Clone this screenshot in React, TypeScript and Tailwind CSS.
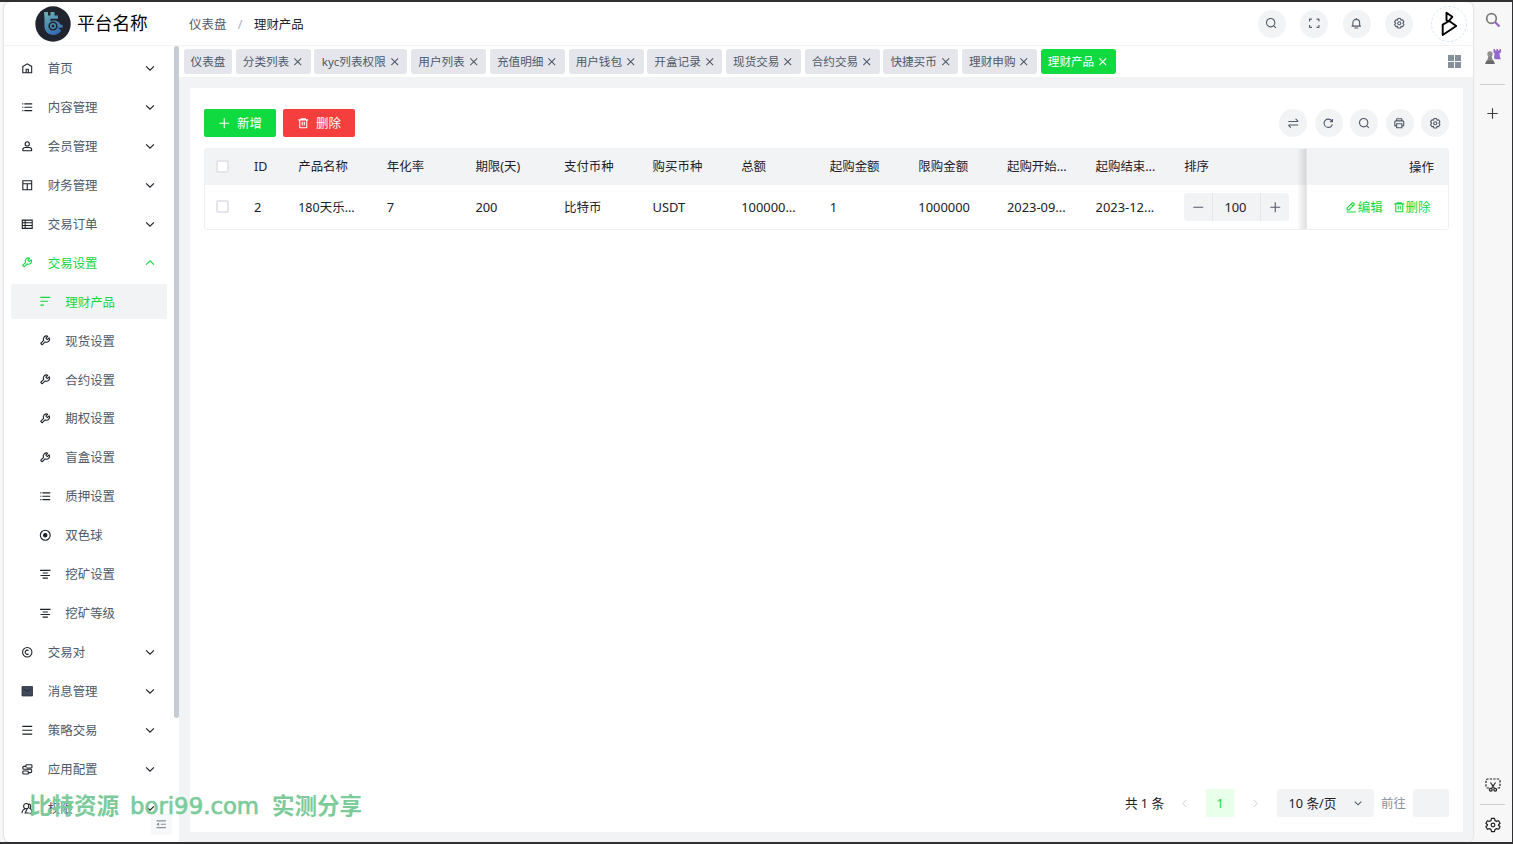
import React from "react";

const PATHS: Record<string, string> = {
  home: "M7 17 24 7l17 10v24H7V17ZM20 28h8v13h-8V28Z",
  list: "M13 24h30M5 11h4M13 37h30M13 11h30M5 24h4M5 37h4",
  user: "M7 37c0-4.97 4.03-8 9-8h16c4.97 0 9 3.03 9 8v3a1 1 0 0 1-1 1H8a1 1 0 0 1-1-1v-3ZM32 15a8 8 0 1 1-16 0 8 8 0 0 1 16 0Z",
  layout: "M7 7h34v34H7V7ZM7 18h34M24 18v23",
  table: "M5 8h38v32H5V8ZM5 18h38M5 29h38M16 8v32",
  tool: "M19.994 11.035c3.66-3.659 9.094-4.46 13.531-2.405a.1.1 0 0 1 .028.16l-6.488 6.488a1 1 0 0 0 0 1.414l4.243 4.243a1 1 0 0 0 1.414 0l6.488-6.488a.1.1 0 0 1 .16.028c2.056 4.437 1.254 9.872-2.405 13.53-3.695 3.696-9.2 4.477-13.66 2.347L12.923 40.733a1 1 0 0 1-1.414 0L7.266 36.49a1 1 0 0 1 0-1.414l10.382-10.381c-2.13-4.46-1.349-9.965 2.346-13.66Z",
  sort: "M43 9H5m0 30h14m15.5-15H5",
  center: "M44 9H4m38 20H6m28-10H14m20 20H14",
  copyright: "M29.292 18a8 8 0 1 0 0 12M42 24c0 9.941-8.059 18-18 18S6 33.941 6 24 14.059 6 24 6s18 8.059 18 18Z",
  menu: "M5 9h38M5 24h38M5 39h38",
  relation: "M19 17V10a3 3 0 0 1 3-3h17a3 3 0 0 1 3 3v6a3 3 0 0 1-3 3H22M17 13h-6a4 4 0 0 0-4 4v3a4 4 0 0 0 4 4h26a4 4 0 0 1 4 4v5a4 4 0 0 1-4 4h-7M10 31h15a3 3 0 0 1 3 3v5a3 3 0 0 1-3 3H10a3 3 0 0 1-3-3v-5a3 3 0 0 1 3-3Z",
  usergroup: "M30 16a10 10 0 1 1-20 0 10 10 0 0 1 20 0ZM4 43c0-9 5-15 12-17M24 26l-8 16h14M30 7c8 1 10 11 4 17 6 3 9 9 9 19H32",
  search: "M33.072 33.071c6.248-6.248 6.248-16.379 0-22.627-6.249-6.249-16.38-6.249-22.628 0-6.248 6.248-6.248 16.379 0 22.627 6.248 6.248 16.38 6.248 22.628 0Zm0 0 8.485 8.485",
  full: "M42 17V9a1 1 0 0 0-1-1h-8M6 17V9a1 1 0 0 1 1-1h8m27 23v8a1 1 0 0 1-1 1h-8M6 31v8a1 1 0 0 0 1 1h8",
  bell: "M24 9c7.18 0 13 5.82 13 13v13H11V22c0-7.18 5.82-13 13-13Zm0 0V4M6 35h36m-25 7h14",
  settings: "M18.797 6.732A1 1 0 0 1 19.76 6h8.48a1 1 0 0 1 .964.732l1.285 4.628a1 1 0 0 0 1.213.7l4.651-1.2a1 1 0 0 1 1.116.468l4.24 7.344a1 1 0 0 1-.153 1.2L38.193 23.3a1 1 0 0 0 0 1.402l3.364 3.427a1 1 0 0 1 .153 1.2l-4.24 7.344a1 1 0 0 1-1.116.468l-4.65-1.2a1 1 0 0 0-1.214.7l-1.285 4.628a1 1 0 0 1-.964.732h-8.48a1 1 0 0 1-.963-.732L17.51 36.64a1 1 0 0 0-1.213-.7l-4.65 1.2a1 1 0 0 1-1.116-.468l-4.24-7.344a1 1 0 0 1 .153-1.2L9.809 24.7a1 1 0 0 0 0-1.402l-3.364-3.427a1 1 0 0 1-.153-1.2l4.24-7.344a1 1 0 0 1 1.116-.468l4.65 1.2a1 1 0 0 0 1.213-.7l1.286-4.628ZM30 24a6 6 0 1 1-12 0 6 6 0 0 1 12 0Z",
  swap: "M5 17h35.586c.89 0 1.337-1.077.707-1.707L33 7M43 31H7.414c-.89 0-1.337 1.077-.707 1.707L15 41",
  refresh: "M38.837 18C36.463 12.136 30.715 8 24 8 15.163 8 8 15.163 8 24s7.163 16 16 16c7.455 0 13.72-5.1 15.496-12M40 8v10H30",
  printer: "M14 15V8a1 1 0 0 1 1-1h18a1 1 0 0 1 1 1v7M14 34H8a1 1 0 0 1-1-1V19a4 4 0 0 1 4-4h26a4 4 0 0 1 4 4v14a1 1 0 0 1-1 1h-6M14 26h20v15H14V26Z",
  edit: "m30.48 19.038 5.733-5.734a1 1 0 0 0 0-1.414l-5.586-5.586a1 1 0 0 0-1.414 0l-5.734 5.734m7 7L15.763 33.754a1 1 0 0 1-.59.286l-6.048.708a1 1 0 0 1-1.113-1.069l.477-6.31a1 1 0 0 1 .29-.631l14.7-14.7m7 7-7-7M6 42h36",
  trash: "M5 11h5.5m0 0v29a1 1 0 0 0 1 1h25a1 1 0 0 0 1-1V11m-27 0H16m21.5 0H43m-5.5 0H32m-16 0V7h16v4m-16 0h16M20 18v15m8-15v15",
  plus: "M5 24h38M24 5v38",
  minus: "M5 24h38",
  down: "M39.6 17.443 24.043 33 8.487 17.443",
  up: "M39.6 30.557 24.043 15 8.487 30.557",
  left: "M32 8.4 16.444 23.956 32 39.513",
  right: "m16 39.513 15.556-15.557L16 8.4",
  close: "M9.857 9.858 38.142 38.142M38.142 9.858 9.857 38.142",
  fold: "M42 11H6M42 24H22M42 37H6M13.66 26.912l-4.82-3.118 4.82-3.118v6.236Z",
};

function Icon({ name, className = "size-[12.5px]", sw = 4.2 }: { name: string; className?: string; sw?: number }) {
  if (name === "record")
    return (
      <svg viewBox="0 0 48 48" className={className} fill="none" stroke="currentColor" strokeWidth={sw}>
        <circle cx="24" cy="24" r="19" />
        <circle cx="24" cy="24" r="6.500" fill="currentColor" />
      </svg>
    );
  if (name === "mail")
    return (
      <svg viewBox="0 0 48 48" className={className}>
        <path d="M4 6h40v36H4z" fill="#3f4a5c" />
        <path d="M4 6h40v36H4zM10 15l14 9 14-9" fill="none" stroke="#1d2129" strokeWidth="3" />
      </svg>
    );
  return (
    <svg viewBox="0 0 48 48" className={className} fill="none" stroke="currentColor" strokeWidth={sw}>
      <path d={PATHS[name]} />
    </svg>
  );
}

const MENU: [string, string, ("sub" | "open" | "active")?][] = [
  ["home", "首页"],
  ["list", "内容管理"],
  ["user", "会员管理"],
  ["layout", "财务管理"],
  ["table", "交易订单"],
  ["tool", "交易设置", "open"],
  ["sort", "理财产品", "active"],
  ["tool", "现货设置", "sub"],
  ["tool", "合约设置", "sub"],
  ["tool", "期权设置", "sub"],
  ["tool", "盲盒设置", "sub"],
  ["list", "质押设置", "sub"],
  ["record", "双色球", "sub"],
  ["center", "挖矿设置", "sub"],
  ["center", "挖矿等级", "sub"],
  ["copyright", "交易对"],
  ["mail", "消息管理"],
  ["menu", "策略交易"],
  ["relation", "应用配置"],
  ["usergroup", "权限"],
];

const TABS = ["仪表盘", "分类列表", "kyc列表权限", "用户列表", "充值明细", "用户钱包", "开盒记录", "现货交易", "合约交易", "快捷买币", "理财申购", "理财产品"];

const COLUMNS: [string, string][] = [
  ["产品名称", "180天乐..."],
  ["年化率", "7"],
  ["期限(天)", "200"],
  ["支付币种", "比特币"],
  ["购买币种", "USDT"],
  ["总额", "100000..."],
  ["起购金额", "1"],
  ["限购金额", "1000000"],
  ["起购开始...", "2023-09..."],
  ["起购结束...", "2023-12..."],
];

const GRID = "grid grid-cols-[35.5px_44px_repeat(10,88.6px)_1fr_142px] items-center";

function MenuRow({ icon, label, kind }: { icon: string; label: string; kind?: string }) {
  const sub = kind === "sub" || kind === "active";
  const green = kind === "open" || kind === "active";
  return (
    <div
      className={`mb-[3.95px] flex h-[35px] shrink-0 items-center rounded-[2px] pr-[11px] ${sub ? "pl-[27.5px]" : "pl-[10px]"} ${
        kind === "active" ? "bg-[#f2f3f5]" : ""
      }`}
    >
      <span className={green ? "text-[#12d83f]" : "text-[#1d2129]"}>
        <Icon name={icon} />
      </span>
      <span className={`ml-[14.300px] flex-1 pt-[2.500px] ${green ? "text-[#12d83f]" : "text-[#4e5969]"}`}>{label}</span>
      {!sub && (
        <span className={green ? "text-[#12d83f]" : "text-[#1d2129]"}>
          <Icon name={green ? "up" : "down"} className="size-3" sw={4.6} />
        </span>
      )}
    </div>
  );
}

function Round({ name }: { name: string }) {
  return (
    <div className="flex size-7 items-center justify-center rounded-full bg-[#f2f3f5] text-[#4e5969]">
      <Icon name={name} />
    </div>
  );
}

function Logo() {
  return (
    <svg viewBox="0 0 36 36" className="size-9">
      <defs>
        <linearGradient id="lg" x1="0.2" y1="0" x2="0.6" y2="1">
          <stop offset="0" stopColor="#68b0b4" />
          <stop offset="1" stopColor="#3569b4" />
        </linearGradient>
      </defs>
      <circle cx="18" cy="18" r="17.7" fill="#20242f" />
      <path
        d="M9 6h4v3.500h2.500V6h4v3.500H23v3.300h-7.500v2.400a7.500 7.500 0 0 1 10 3.300l2.200.7v2.500h-4.700a5 5 0 1 1-.8-4.700 5 5 0 1 0 .8 4.700l3.200 2.800a9 9 0 0 1-7.700 4.500c-5.500 0-9-3.600-9-9V12.800Z"
        fill="url(#lg)"
      />
      <circle cx="18" cy="20" r="4.600" fill="#20242f" />
      <circle cx="18" cy="20" r="3" fill="#4a93b4" />
      <circle cx="18" cy="20" r="1.500" fill="#20242f" />
    </svg>
  );
}

function Sidebar() {
  return (
    <aside className="flex w-[175px] shrink-0">
      <div className="relative flex w-[170px] flex-col overflow-hidden px-[7px] pt-[4.5px]">
        {MENU.map(([icon, label, kind]) => (
          <MenuRow key={label + icon} icon={icon} label={label} kind={kind} />
        ))}
        <div className="absolute bottom-[7px] left-[147px] flex size-[21px] items-center justify-center bg-[#f7f8fa] text-[#86909c]">
          <Icon name="fold" />
        </div>
      </div>
      <div className="h-[672px] w-[5px] rounded-full bg-[#c6ccd4]" />
    </aside>
  );
}

function Header() {
  return (
    <header className="flex h-[44px] shrink-0 items-center border-b border-[#f2f3f5] pr-[6px]">
      <div className="flex w-[185px] items-center gap-[6.500px] pl-[30.500px] text-[17.700px] text-black">
        <Logo />
        <span>平台名称</span>
      </div>
      <div className="flex flex-1 items-center gap-[11.500px] pt-[3.500px] text-[#4e5969]">
        <span>仪表盘</span>
        <span className="text-[#a9b0ba]">/</span>
        <span className="text-[#1d2129]">理财产品</span>
      </div>
      <div className="flex items-center gap-[14.500px]">
        <Round name="search" />
        <Round name="full" />
        <Round name="bell" />
        <Round name="settings" />
      </div>
      <svg viewBox="0 0 36 36" className="ml-[18px] size-9">
        <circle cx="18" cy="18" r="17.500" fill="white" stroke="#cfe0f5" strokeWidth="0.8" strokeDasharray="3 1.500" />
        <path d="M15.500 6.800 21.300 10.800 17.500 15.300 15.500 14.300ZM18.300 15 25.200 20 11.700 29V18.700Z" fill="none" stroke="black" strokeWidth="1.900" strokeLinejoin="round" />
      </svg>
    </header>
  );
}

function Tabs() {
  return (
    <div className="flex h-[30.500px] shrink-0 items-center justify-between bg-white pr-[12.500px] pl-[5px]">
      <div className="flex gap-[3.800px] text-[11.600px]">
        {TABS.map((t, i) => (
          <div
            key={t}
            className={`flex h-[24.500px] items-center justify-center gap-[3px] rounded-[3px] whitespace-nowrap ${
              i === 0 ? "w-[48px]" : i === 2 ? "w-[93px]" : "w-[74.900px]"
            } ${i === 11 ? "bg-[#0fda3f] text-white" : "bg-[#e5e6eb] text-[#4e5969]"}`}
          >
            <span className="pt-[2px]">{t}</span>
            {i > 0 && (
              <span className="pt-px">
                <Icon name="close" className="size-[11.500px]" sw={4.500} />
              </span>
            )}
          </div>
        ))}
      </div>
      <div className="grid grid-cols-2 gap-px">
        <i className="size-[6px] bg-[#86909c]" />
        <i className="size-[6px] bg-[#86909c]" />
        <i className="size-[6px] bg-[#86909c]" />
        <i className="size-[6px] bg-[#86909c]" />
      </div>
    </div>
  );
}

function Check() {
  return <div className="ml-[11px] size-[13px] -translate-y-px rounded-[2px] border-2 border-[#e5e6eb] bg-white" />;
}

function DataTable() {
  return (
    <div className="relative mt-[11px] rounded-[3px] border border-[#eff0f3] text-[#1d2129]">
      <div className={`${GRID} h-[36px] bg-[#f2f3f5]`}>
        <Check />
        <div className="pt-px pl-[13.500px]">ID</div>
        {COLUMNS.map(([h]) => (
          <div key={h} className="pt-px pl-[13.700px] whitespace-nowrap">{h}</div>
        ))}
        <div className="pt-px pl-[13.700px]">排序</div>
        <div className="flex h-full items-center justify-end border-l border-[#e5e6eb] pt-[2px] pr-[14px]">操作</div>
      </div>
      <div className={`${GRID} h-[44px]`}>
        <Check />
        <div className="pl-[13.500px] text-[12.900px]">2</div>
        {COLUMNS.map(([h, v]) => (
          <div
            key={h}
            className={`pl-[13.700px] whitespace-nowrap ${/^[\w.-]+$/.test(v) ? "text-[12.900px]" : "pt-[2.500px] text-[12.500px]"}`}
          >
            {v}
          </div>
        ))}
        <div className="pl-[14px]">
          <div className="flex h-[28px] w-[105px] items-center rounded-[3px] bg-[#f2f3f5]">
            <div className="flex h-full w-[29px] items-center justify-center border-r border-[#e5e6eb] text-[#4e5969]">
              <Icon name="minus" />
            </div>
            <div className="flex-1 pr-[3px] text-center text-[12.900px]">100</div>
            <div className="flex h-full w-[29px] items-center justify-center border-l border-[#e5e6eb] text-[#4e5969]">
              <Icon name="plus" />
            </div>
          </div>
        </div>
        <div className="flex h-full items-center justify-end gap-[10.500px] border-l border-[#e5e6eb] pr-[17.500px] text-[#12d83f]">
          <span className="flex items-center">
            <Icon name="edit" />
            <span className="pt-[2px]">编辑</span>
          </span>
          <span className="flex items-center">
            <Icon name="trash" />
            <span className="pt-[2px]">删除</span>
          </span>
        </div>
      </div>
      <div className="absolute top-0 right-[142px] h-full w-[9px] bg-linear-to-l from-black/12 to-transparent" />
    </div>
  );
}

function Pager() {
  return (
    <div className="mt-auto flex h-[28px] items-center justify-end text-[#1d2129]">
      <span className="pt-px text-[12.700px]">共 1 条</span>
      <span className="ml-[15px] text-[#c9cdd4]">
        <Icon name="left" className="size-[11px]" />
      </span>
      <span className="ml-[16px] flex size-7 items-center justify-center bg-[#e8ffea] pt-[2px] text-[#12d83f]">1</span>
      <span className="ml-[16px] text-[#c9cdd4]">
        <Icon name="right" className="size-[11px]" />
      </span>
      <div className="ml-[16px] flex h-full w-[97px] items-center justify-between rounded-[3px] bg-[#f2f3f5] pr-[11px] pl-[11.500px]">
        <span className="pt-px text-[12.700px]">10 条/页</span>
        <span className="text-[#4e5969]">
          <Icon name="down" className="size-[10px]" sw={5} />
        </span>
      </div>
      <span className="ml-[7px] pt-[2px] text-[#86909c]">前往</span>
      <div className="ml-[7px] h-full w-[36px] rounded-[3px] bg-[#f2f3f5]" />
    </div>
  );
}

function BrowserRail() {
  return (
    <div className="flex w-[39px] shrink-0 flex-col items-center pt-[10px] pb-[9px] text-[#3b3b3b]">
      <svg viewBox="0 0 16 16" className="size-4" fill="none">
        <circle cx="6.500" cy="6.500" r="4.800" stroke="#7b7b7b" strokeWidth="1.700" />
        <path d="m10 10 4.500 4.500" stroke="#9a5fd0" strokeWidth="2.200" />
      </svg>
      <svg viewBox="0 0 18 18" className="mt-[20px] size-[18px]">
        <circle cx="6" cy="6" r="2.700" fill="#929292" />
        <path d="M4.500 8h3l1.500 5H3Z" fill="#858585" />
        <path d="M2.500 12.500h7l1.500 3.500H1Z" fill="#6a6a6a" />
        <path d="M9.500 1H11v1.500h1.500V1h1.500v1.500h1.500V1H17v3.500l-1.500.8.500 4 1 2h-5.500l-1.500-1 .5-5-1-.8Z" fill="#9268cf" />
      </svg>
      <div className="mt-[18px] h-px w-[25px] bg-[#cfcfcf]" />
      <div className="mt-[21.500px]">
        <Icon name="plus" className="size-[13px]" />
      </div>
      <svg viewBox="0 0 16 16" className="mt-auto size-4" fill="none" stroke="#222" strokeWidth="1.200">
        <path d="M4 11H2.500A1.500 1.500 0 0 1 1 9.500v-6A1.500 1.500 0 0 1 2.500 2h11A1.500 1.500 0 0 1 15 3.500v6a1.500 1.500 0 0 1-1.500 1.500H12" strokeDasharray="2.300 1.200" />
        <path d="m5.500 5.500 4 6M10.500 5.500l-4 6" />
        <circle cx="5.800" cy="12.800" r="1.400" />
        <circle cx="10.200" cy="12.800" r="1.400" />
      </svg>
      <div className="mt-[11px] h-px w-[25px] bg-[#cfcfcf]" />
      <svg viewBox="0 0 48 48" className="mt-[12px] size-4" fill="none" stroke="#222" strokeWidth="3.600">
        <path d="M19.500 4h9l1.500 6.500 4.500 2.600 6.300-2 4.500 7.800-4.800 4.500v1.200l4.800 4.500-4.500 7.800-6.300-2-4.500 2.600L28.500 44h-9L18 37.500l-4.500-2.600-6.300 2-4.500-7.800 4.800-4.500v-1.200l-4.800-4.500 4.500-7.800 6.300 2 4.500-2.600Z" strokeLinejoin="round" />
        <circle cx="24" cy="24" r="5.500" />
      </svg>
    </div>
  );
}

export default function App() {
  return (
    <div className="relative flex h-[844px] w-[1513px] overflow-hidden border-t-2 border-r border-b-2 border-[#302f31] bg-[#f7f7f7] pl-1 font-['Noto_Sans','Noto_Sans_CJK_SC',sans-serif] text-[12.450px] leading-none">
      <div className="flex min-w-0 flex-1 flex-col overflow-hidden rounded-[6px] bg-white shadow-[0_0_2px_rgba(0,0,0,0.25)]">
        <Header />
        <div className="flex min-h-0 flex-1">
          <Sidebar />
          <main className="flex min-w-0 flex-1 flex-col bg-[#f2f3f5]">
            <Tabs />
            <section className="mt-[11.500px] mr-[10px] mb-[10px] ml-[11px] flex flex-1 flex-col bg-white px-[14px] pt-[21px] pb-[15px]">
              <div className="flex h-7 items-center justify-between">
                <div className="flex gap-[7px] text-white">
                  <div className="flex h-7 w-[72px] items-center justify-center gap-[6.500px] rounded-[2px] bg-[#0fda3f]">
                    <Icon name="plus" />
                    <span className="pt-[2px]">新增</span>
                  </div>
                  <div className="flex h-7 w-[72px] items-center justify-center gap-[6.500px] rounded-[2px] bg-[#f53f3f]">
                    <Icon name="trash" />
                    <span className="pt-[2px]">删除</span>
                  </div>
                </div>
                <div className="flex gap-[7.500px]">
                  {["swap", "refresh", "search", "printer", "settings"].map((n) => (
                    <Round key={n} name={n} />
                  ))}
                </div>
              </div>
              <DataTable />
              <Pager />
            </section>
          </main>
        </div>
      </div>
      <BrowserRail />
      <div className="absolute top-[792px] left-[29px] flex h-6 items-center text-[22.500px] font-bold whitespace-nowrap text-[#7ccb9b]">
        <span className="w-[101px]">比特资源</span>
        <span className="w-[142px] font-['DejaVu_Sans',sans-serif] text-[22.800px] font-normal [-webkit-text-stroke:0.7px_#7ccb9b]">bori99.com</span>
        <span>实测分享</span>
      </div>
    </div>
  );
}
